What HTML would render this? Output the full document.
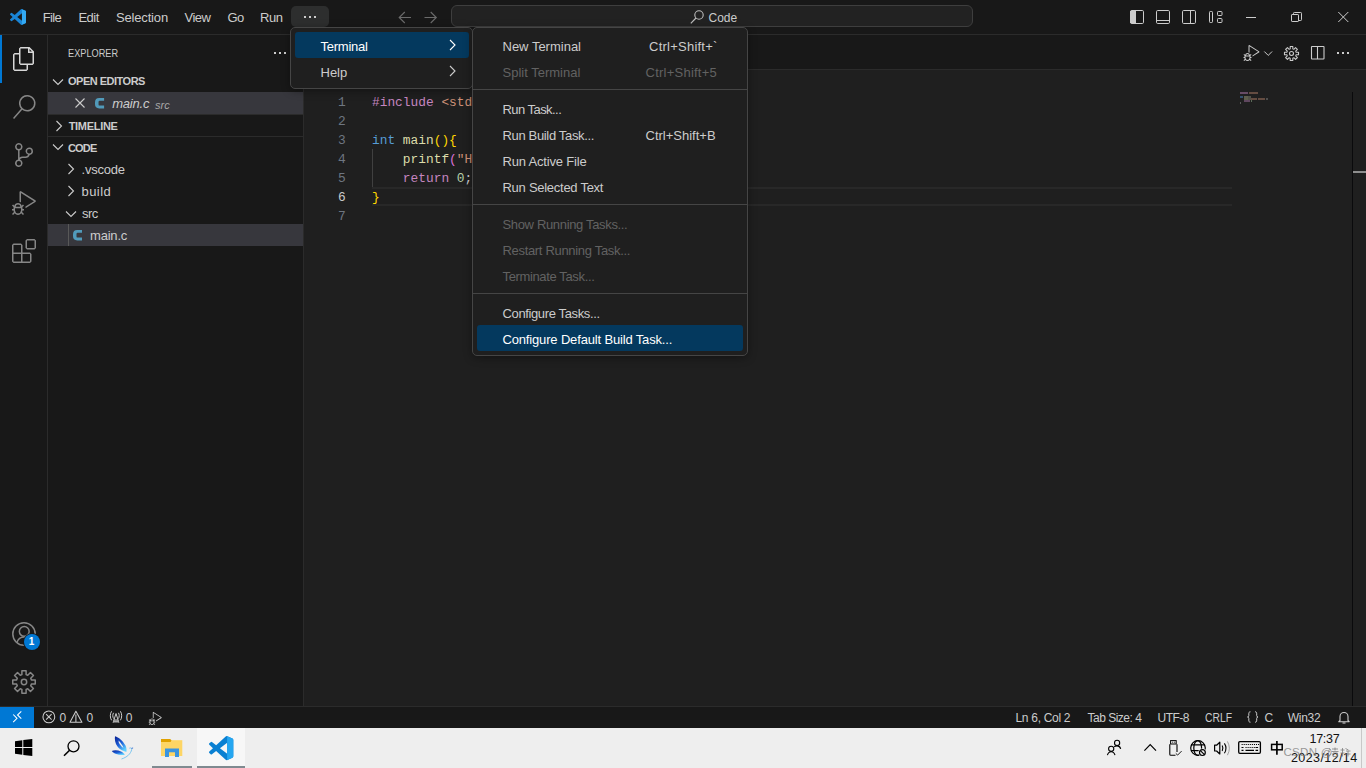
<!DOCTYPE html>
<html><head><meta charset="utf-8">
<style>
*{box-sizing:border-box;margin:0;padding:0}
html,body{width:1366px;height:768px;overflow:hidden;background:#1f1f1f;font-family:"Liberation Sans",sans-serif;color:#cccccc}
.a{position:absolute}
.t{position:absolute;white-space:pre;line-height:1}
svg{position:absolute;overflow:visible}
#titlebar{left:0;top:0;width:1366px;height:35px;background:#181818;border-bottom:1px solid #2b2b2b}
#activity{left:0;top:35px;width:48px;height:671px;background:#181818;border-right:1px solid #2b2b2b}
#sidebar{left:48px;top:35px;width:256px;height:671px;background:#181818;border-right:1px solid #2b2b2b}
#tabs{left:304px;top:35px;width:1062px;height:35px;background:#181818;border-bottom:1px solid #2b2b2b}
#editor{left:304px;top:70px;width:1062px;height:636px;background:#1f1f1f}
#status{left:0;top:706px;width:1366px;height:22px;background:#181818;border-top:1px solid #2b2b2b}
#taskbar{left:0;top:728px;width:1366px;height:40px;background:#eeeeee}
.menu{position:absolute;background:#1f1f1f;border:1px solid #454545;border-radius:5px;box-shadow:0 2px 8px rgba(0,0,0,.36)}
.mi{position:absolute;font-size:13px;color:#cccccc;white-space:pre;line-height:1}
.dis{color:#626262}
.sep{position:absolute;height:1px;background:#454545}
.code{position:absolute;font-family:"Liberation Mono",monospace;font-size:12.85px;white-space:pre;line-height:19px}
.ln{position:absolute;font-family:"Liberation Mono",monospace;font-size:12.85px;white-space:pre;line-height:19px;text-align:right;color:#6e7681}
.tb{font-size:13px;color:#cccccc}
.sb{font-size:12px;color:#cccccc}
</style></head>
<body>
<!-- ================= TITLE BAR ================= -->
<div id="titlebar" class="a"></div>
<svg style="left:10px;top:9px" width="16" height="16" viewBox="0 0 100 100"><path fill="#1a85d6" d="M96.46 10.8L75.86.87a6.23 6.23 0 0 0-7.1 1.2L29.35 38.04 12.18 25.01a4.16 4.16 0 0 0-5.320.24L1.36 30.25a4.16 4.16 0 0 0 0 6.16L16.25 50 1.36 63.59a4.160 4.16 0 0 0 0 6.16l5.5 5a4.16 4.16 0 0 0 5.32.24l17.17-13.03 39.41 35.96a6.23 6.23 0 0 0 7.1 1.2l20.6-9.92a6.25 6.25 0 0 0 3.54-5.63V16.43a6.25 6.25 0 0 0-3.54-5.63zM75.02 72.7L45.11 50l29.91-22.7z"/><path fill="#33a9f2" d="M74.5 1.2L96.46 10.8a6.25 6.25 0 0 1 3.54 5.63V83.57a6.25 6.25 0 0 1-3.54 5.63L74.5 98.8z"/></svg>
<span class="t tb" style="left:42.8px;top:11px;letter-spacing:-0.65px">File</span>
<span class="t tb" style="left:78.5px;top:11px;letter-spacing:-0.55px">Edit</span>
<span class="t tb" style="left:116px;top:11px;letter-spacing:-0.17px">Selection</span>
<span class="t tb" style="left:184.5px;top:11px;letter-spacing:-0.5px">View</span>
<span class="t tb" style="left:227.5px;top:11px;letter-spacing:-0.6px">Go</span>
<span class="t tb" style="left:260px;top:11px;letter-spacing:-0.45px">Run</span>
<div class="a" style="left:291px;top:6px;width:38px;height:21px;background:#2d2e2e;border-radius:5px"></div>
<div class="a" style="left:304px;top:16px;width:2px;height:2px;background:#cccccc"></div>
<div class="a" style="left:309px;top:16px;width:2px;height:2px;background:#cccccc"></div>
<div class="a" style="left:314px;top:16px;width:2px;height:2px;background:#cccccc"></div>
<!-- nav arrows -->
<svg style="left:398px;top:11px" width="14" height="13" viewBox="0 0 14 13"><path d="M13 6.5H1.2M6.8 1L1.2 6.5 6.8 12" stroke="#6b6b6b" stroke-width="1.1" fill="none"/></svg>
<svg style="left:424px;top:11px" width="14" height="13" viewBox="0 0 14 13"><path d="M0.5 6.5H12.3M6.7 1l5.6 5.5L6.7 12" stroke="#6b6b6b" stroke-width="1.1" fill="none"/></svg>
<!-- command center -->
<div class="a" style="left:451px;top:5px;width:522px;height:22px;background:#222222;border:1px solid #3e3e3e;border-radius:6px"></div>
<svg style="left:690px;top:10px" width="14" height="14" viewBox="0 0 14 14"><circle cx="9" cy="5" r="4.2" stroke="#bdbdbd" stroke-width="1.1" fill="none"/><path d="M6 8L0.8 13.3" stroke="#bdbdbd" stroke-width="1.2"/></svg>
<span class="t" style="left:708.5px;top:12px;font-size:12px;color:#cccccc">Code</span>
<!-- layout icons -->
<svg style="left:1120px;top:0" width="120" height="34" viewBox="1120 0 120 34"><g stroke="#cccccc" stroke-width="1" fill="none">
<rect x="1130.5" y="10.5" width="13" height="13" rx="1.2"/><path d="M1130 11h5.5v12H1130z" fill="#cccccc" stroke="none"/><rect x="1131" y="10.5" width="5" height="13" fill="#cccccc" stroke="none"/>
<rect x="1156.5" y="10.5" width="13" height="13" rx="1.2"/><path d="M1156.5 20.5h13"/>
<rect x="1182.5" y="10.5" width="13" height="13" rx="1.2"/><path d="M1190.5 10.5v13"/>
<rect x="1209.5" y="11.5" width="3" height="11" rx="0.8"/><rect x="1217.5" y="11.5" width="4.5" height="4" rx="0.8"/><rect x="1217.5" y="18.5" width="4.5" height="4" rx="0.8"/>
</g></svg>
<!-- window controls -->
<div class="a" style="left:1246px;top:17px;width:10px;height:1px;background:#cccccc"></div>
<svg style="left:1291px;top:12px" width="11" height="10" viewBox="0 0 11 10"><rect x="0.5" y="2.5" width="7" height="7" rx="0.6" stroke="#cccccc" stroke-width="1" fill="none"/><path d="M2.5 2.5V1.3Q2.5 0.5 3.3 0.5H9.7Q10.5 0.5 10.5 1.3V7.7Q10.5 8.5 9.7 8.5H7.5" stroke="#cccccc" stroke-width="1" fill="none"/></svg>
<svg style="left:1338px;top:12px" width="11" height="10" viewBox="0 0 11 10"><path d="M0.3 0L10.3 10M10.3 0L0.3 10" stroke="#cccccc" stroke-width="1"/></svg>

<!-- ================= ACTIVITY BAR ================= -->
<div id="activity" class="a"></div>
<div class="a" style="left:0;top:35px;width:2px;height:48px;background:#0078d4"></div>
<svg style="left:12px;top:47px" width="24" height="24" viewBox="0 0 24 24"><path fill="#d7d7d7" fill-rule="evenodd" d="M17.5 0h-9L7 1.5V6H2.5L1 7.5v15.07L2.5 24h12.07L16 22.57V18h4.7l1.3-1.43V4.5L17.5 0zm0 2.12l2.38 2.38H17.5V2.12zm-3 20.38h-12v-15H7v9.07L8.5 18h6v4.5zm6-6h-12v-15H16V6h4.5v10.5z"/></svg>
<svg style="left:12px;top:95px" width="24" height="24" viewBox="0 0 24 24"><path fill="#868686" d="M15.25 0a8.25 8.25 0 0 0-6.18 13.72L1 22.88l1.12 1 8.07-9.16A8.25 8.25 0 1 0 15.25.01V0zm0 15a6.75 6.75 0 1 1 0-13.5 6.75 6.75 0 0 1 0 13.5z"/></svg>
<svg style="left:12px;top:143px" width="24" height="24" viewBox="0 0 24 24"><path fill="#868686" d="M21.007 8.222A3.738 3.738 0 0 0 15.045 5.2a3.737 3.737 0 0 0 1.156 6.583 2.988 2.988 0 0 1-2.668 1.67h-2.99a4.456 4.456 0 0 0-2.989 1.165V7.4a3.737 3.737 0 1 0-1.494 0v9.117a3.776 3.776 0 1 0 1.816.099 2.99 2.99 0 0 1 2.668-1.667h2.990a4.484 4.484 0 0 0 4.223-3.039 3.736 3.736 0 0 0 3.250-3.687zM4.565 3.738a2.242 2.242 0 1 1 4.484 0 2.242 2.242 0 0 1-4.484 0zm4.484 16.441a2.242 2.242 0 1 1-4.484 0 2.242 2.242 0 0 1 4.484 0zm8.221-9.715a2.242 2.242 0 1 1 0-4.485 2.242 2.242 0 0 1 0 4.485z"/></svg>
<svg style="left:12px;top:191px" width="24" height="24" viewBox="0 0 24 24"><path fill="#868686" d="M10.94 13.5l-1.32 1.32a3.730 3.73 0 0 0-7.240 0L1.06 13.5 0 14.56l1.72 1.72-.22.22V18H0v1.5h1.5v.08c.077.489.214.966.41 1.42L0 22.94 1.06 24l1.65-1.65A4.308 4.308 0 0 0 6 24a4.310 4.31 0 0 0 3.290-1.65L10.94 24 12 22.94 10.09 21c.198-.464.336-.951.41-1.450v-.1H12V18h-1.5v-1.5l-.22-.22L12 14.56l-1.06-1.06zM6 13.5a2.25 2.25 0 0 1 2.25 2.25h-4.5A2.25 2.25 0 0 1 6 13.5zm3 6a3.33 3.33 0 0 1-3 3 3.33 3.33 0 0 1-3-3v-2.25h6v2.25zm14.76-9.9v1.26L13.5 17.37V15.6l8.5-5.37L9 2v9.46a5.07 5.070 0 0 0-1.5-.72V.63L8.64 0l15.12 9.6z"/></svg>
<svg style="left:12px;top:239px" width="24" height="24" viewBox="0 0 24 24"><path fill="#868686" d="M13.5 1.5L15 0h7.5L24 1.5V9l-1.5 1.5H15L13.5 9V1.5zm1.5 0V9h7.5V1.5H15zM0 15V6l1.5-1.5H9L10.5 6v7.5H18l1.5 1.5v7.5L18 24H1.5L0 22.5V15zm9-1.5V6H1.5v7.5H9zM9 15H1.5v7.5H9V15zm1.5 7.5H18V15h-7.5v7.5z"/></svg>
<!-- accounts -->
<svg style="left:12px;top:622px" width="24" height="24" viewBox="0 0 24 24"><circle cx="12" cy="12" r="11.2" stroke="#868686" stroke-width="1.5" fill="none"/><circle cx="12.25" cy="9.4" r="4.9" stroke="#868686" stroke-width="1.5" fill="none"/><path d="M4.9 20.6C6 17 8.8 15 12.2 15s6.3 2 7.4 5.6" stroke="#868686" stroke-width="1.5" fill="none"/></svg>
<div class="a" style="left:23px;top:633px;width:18px;height:18px;border-radius:9px;background:#181818"></div><div class="a" style="left:24px;top:634px;width:16px;height:16px;border-radius:8px;background:#0078d4"></div>
<span class="t" style="left:28.7px;top:637px;font-size:10px;font-weight:700;color:#ffffff">1</span>
<!-- gear -->
<svg style="left:12px;top:670px" width="24" height="24" viewBox="0 0 24 24"><path stroke="#868686" stroke-width="1.5" fill="none" stroke-linejoin="round" d="M9.90 4.60 L9.90 0.75 L14.10 0.75 L14.10 4.60 L15.75 5.28 L18.47 2.56 L21.44 5.53 L18.72 8.25 L19.40 9.90 L23.25 9.90 L23.25 14.10 L19.40 14.10 L18.72 15.75 L21.44 18.47 L18.47 21.44 L15.75 18.72 L14.10 19.40 L14.10 23.25 L9.90 23.25 L9.90 19.40 L8.25 18.72 L5.53 21.44 L2.56 18.47 L5.28 15.75 L4.60 14.10 L0.75 14.10 L0.75 9.90 L4.60 9.90 L5.28 8.25 L2.56 5.53 L5.53 2.56 L8.25 5.28Z"/><circle cx="12" cy="12" r="2.7" stroke="#868686" stroke-width="1.5" fill="none"/></svg>

<!-- ================= SIDEBAR ================= -->
<div id="sidebar" class="a"></div>
<span class="t" style="left:68px;top:47.7px;font-size:11px;transform:scaleX(0.835);transform-origin:0 0">EXPLORER</span>
<div class="a" style="left:274px;top:52px;width:2px;height:2px;background:#cccccc"></div>
<div class="a" style="left:279px;top:52px;width:2px;height:2px;background:#cccccc"></div>
<div class="a" style="left:284px;top:52px;width:2px;height:2px;background:#cccccc"></div>
<!-- open editors header -->
<svg style="left:52px;top:77.6px" width="12" height="8" viewBox="0 0 12 8"><path d="M1 1.5l5 5 5-5" stroke="#cccccc" stroke-width="1.1" fill="none"/></svg>
<span class="t" style="left:68px;top:75.7px;font-size:11px;font-weight:700;letter-spacing:-0.5px">OPEN EDITORS</span>
<div class="a" style="left:48px;top:92px;width:255px;height:22px;background:#37373d"></div>
<svg style="left:75px;top:98px" width="10" height="10" viewBox="0 0 10 10"><path d="M0.5 0.5l9 9M9.5 0.5l-9 9" stroke="#cccccc" stroke-width="1.1"/></svg>
<svg style="left:95.1px;top:97.8px" width="9.1" height="10.4" viewBox="0 0 9 10.4" preserveAspectRatio="none"><path fill="#519aba" d="M9 0H4.2Q0 0 0 4.4V6Q0 10.4 4.2 10.4H9V7.6H4.6Q3.5 7.6 3.5 6.4V4Q3.5 2.8 4.6 2.8H9Z"/></svg>
<span class="t" style="left:112.2px;top:97px;font-size:13px;font-style:italic;letter-spacing:-0.2px">main.c</span>
<span class="t" style="left:155px;top:99.7px;font-size:11px;font-style:italic;color:#a8a8a8">src</span>
<!-- timeline header -->
<div class="a" style="left:48px;top:114px;width:255px;height:1px;background:#2b2b2b"></div>
<svg style="left:55px;top:120px" width="8" height="12" viewBox="0 0 8 12"><path d="M1.5 1l5 5-5 5" stroke="#cccccc" stroke-width="1.1" fill="none"/></svg>
<span class="t" style="left:68.7px;top:120.7px;font-size:11px;font-weight:700;letter-spacing:-0.3px">TIMELINE</span>
<!-- code header -->
<div class="a" style="left:48px;top:136px;width:255px;height:1px;background:#2b2b2b"></div>
<svg style="left:52px;top:143px" width="12" height="8" viewBox="0 0 12 8"><path d="M1 1.5l5 5 5-5" stroke="#cccccc" stroke-width="1.1" fill="none"/></svg>
<span class="t" style="left:68px;top:142.7px;font-size:11px;font-weight:700;letter-spacing:-0.85px">CODE</span>
<!-- tree -->
<svg style="left:67px;top:163.2px" width="8" height="12" viewBox="0 0 8 12"><path d="M1.5 1l5 5-5 5" stroke="#cccccc" stroke-width="1.1" fill="none"/></svg>
<span class="t" style="left:81.5px;top:163px;font-size:13px;letter-spacing:-0.2px">.vscode</span>
<svg style="left:67px;top:185.2px" width="8" height="12" viewBox="0 0 8 12"><path d="M1.5 1l5 5-5 5" stroke="#cccccc" stroke-width="1.1" fill="none"/></svg>
<span class="t" style="left:81.5px;top:185px;font-size:13px;letter-spacing:0.45px">build</span>
<svg style="left:65px;top:210px" width="12" height="8" viewBox="0 0 12 8"><path d="M1 1.5l5 5 5-5" stroke="#cccccc" stroke-width="1.1" fill="none"/></svg>
<span class="t" style="left:82px;top:207px;font-size:13px;letter-spacing:-0.6px">src</span>
<div class="a" style="left:48px;top:224px;width:255px;height:22px;background:#37373d"></div>
<div class="a" style="left:68px;top:224px;width:1px;height:22px;background:#585858"></div>
<svg style="left:73.3px;top:229.8px" width="9" height="10.4" viewBox="0 0 9 10.4" preserveAspectRatio="none"><path fill="#519aba" d="M9 0H4.2Q0 0 0 4.4V6Q0 10.4 4.2 10.4H9V7.6H4.6Q3.5 7.6 3.5 6.4V4Q3.5 2.8 4.6 2.8H9Z"/></svg>
<span class="t" style="left:90px;top:229px;font-size:13px;letter-spacing:-0.2px">main.c</span>

<!-- ================= EDITOR ================= -->
<div id="tabs" class="a"></div>
<div id="editor" class="a"></div>
<!-- editor actions -->
<svg style="left:1243px;top:45px" width="17" height="16" viewBox="0 0 24 24"><path fill="#cccccc" d="M10.94 13.5l-1.32 1.32a3.730 3.73 0 0 0-7.240 0L1.06 13.5 0 14.56l1.720 1.72-.22.22V18H0v1.5h1.5v.08c.077.489.214.966.41 1.42L0 22.94 1.06 24l1.65-1.65A4.308 4.308 0 0 0 6 24a4.310 4.31 0 0 0 3.290-1.65L10.94 24 12 22.94 10.09 21c.198-.464.336-.951.41-1.450v-.1H12V18h-1.5v-1.5l-.22-.22L12 14.56l-1.06-1.06zM6 13.5a2.25 2.25 0 0 1 2.25 2.25h-4.5A2.25 2.25 0 0 1 6 13.5zm3 6a3.33 3.33 0 0 1-3 3 3.33 3.33 0 0 1-3-3v-2.25h6v2.25zm14.76-9.9v1.26L13.5 17.37V15.6l8.5-5.37L9 2v9.46a5.07 5.070 0 0 0-1.5-.72V.63L8.64 0l15.12 9.6z"/></svg>
<svg style="left:1264px;top:51px" width="9" height="5" viewBox="0 0 9 5"><path d="M0.3 0.5l3.9 3.9 3.9-3.9" stroke="#cccccc" stroke-width="1" fill="none"/></svg>
<svg style="left:1283.5px;top:45.5px" width="15" height="15" viewBox="0 0 24 24"><path stroke="#cccccc" stroke-width="1.7" fill="none" stroke-linejoin="round" d="M9.90 4.60 L9.90 0.75 L14.10 0.75 L14.10 4.60 L15.75 5.28 L18.47 2.56 L21.44 5.53 L18.72 8.25 L19.40 9.90 L23.25 9.90 L23.25 14.10 L19.40 14.10 L18.72 15.75 L21.44 18.47 L18.47 21.44 L15.75 18.72 L14.10 19.40 L14.10 23.25 L9.90 23.25 L9.90 19.40 L8.25 18.72 L5.53 21.44 L2.56 18.47 L5.28 15.75 L4.60 14.10 L0.75 14.10 L0.75 9.90 L4.60 9.90 L5.28 8.25 L2.56 5.53 L5.53 2.56 L8.25 5.28Z"/><circle cx="12" cy="12" r="3.2" stroke="#cccccc" stroke-width="1.7" fill="none"/></svg>
<svg style="left:1310px;top:46px" width="15" height="14" viewBox="0 0 15 14"><rect x="1.5" y="0.5" width="12.5" height="12.5" rx="0.5" stroke="#cccccc" stroke-width="1.1" fill="none"/><path d="M7.5 0.5V13" stroke="#cccccc" stroke-width="1.1"/></svg>
<div class="a" style="left:1337px;top:52px;width:2px;height:2px;background:#cccccc"></div>
<div class="a" style="left:1342px;top:52px;width:2px;height:2px;background:#cccccc"></div>
<div class="a" style="left:1347px;top:52px;width:2px;height:2px;background:#cccccc"></div>

<!-- current line highlight -->
<div class="a" style="left:372px;top:187px;width:860px;height:19px;border-top:2px solid #282828;border-bottom:2px solid #282828"></div>
<!-- indent guide -->
<div class="a" style="left:372px;top:149px;width:1px;height:38px;background:#404040"></div>
<!-- line numbers -->
<div class="ln" style="left:310px;top:93px;width:35.7px">1
2
3
4
5
<span style="color:#cccccc">6</span>
7</div>
<div class="code" style="left:372px;top:93px;color:#cccccc"><span style="color:#c586c0">#include</span> <span style="color:#ce9178">&lt;stdio.h&gt;</span>

<span style="color:#569cd6">int</span> <span style="color:#dcdcaa">main</span><span style="color:#ffd700">(){</span>
    <span style="color:#dcdcaa">printf</span><span style="color:#da70d6">(</span><span style="color:#ce9178">"Hello World!\n"</span><span style="color:#da70d6">)</span>;
    <span style="color:#c586c0">return</span> <span style="color:#b5cea8">0</span>;
<span style="color:#ffd700">}</span>
</div>
<!-- minimap -->
<div class="a" style="left:1240px;top:92px;width:8px;height:2px;background:#674c65"></div>
<div class="a" style="left:1249px;top:92px;width:9px;height:2px;background:#644c41"></div>
<div class="a" style="left:1240px;top:96px;width:3px;height:2px;background:#34526e"></div>
<div class="a" style="left:1244px;top:96px;width:7px;height:4px;background:#515147"></div>
<div class="a" style="left:1244px;top:96px;width:4px;height:4px;background:#5e5e4c"></div>
<div class="a" style="left:1251px;top:98px;width:6px;height:2px;background:#644c41"></div>
<div class="a" style="left:1258px;top:98px;width:7px;height:2px;background:#644c41"></div>
<div class="a" style="left:1266px;top:98px;width:2px;height:2px;background:#4e4e4e"></div>
<div class="a" style="left:1244px;top:100px;width:6px;height:2px;background:#5f475f"></div>
<div class="a" style="left:1251px;top:100px;width:1px;height:2px;background:#5b6c59"></div>
<div class="a" style="left:1240px;top:102px;width:1px;height:2px;background:#5b5b5b"></div>
<!-- scrollbar -->
<div class="a" style="left:1352px;top:92px;width:1px;height:614px;background:#0a0a0c"></div>
<div class="a" style="left:1353px;top:171px;width:13px;height:2px;background:#8e8e8e"></div>

<!-- ================= MENUS ================= -->
<div class="menu" style="left:290px;top:27px;width:183px;height:62px"></div>
<div class="a" style="left:295px;top:32px;width:174px;height:26px;background:#04395e;border-radius:3px"></div>
<span class="mi" style="left:320.5px;top:40px;color:#ffffff;letter-spacing:-0.25px">Terminal</span>
<svg style="left:449px;top:39px" width="8" height="12" viewBox="0 0 8 12"><path d="M1 1l5 5-5 5" stroke="#ffffff" stroke-width="1.1" fill="none"/></svg>
<span class="mi" style="left:320.5px;top:66px">Help</span>
<svg style="left:449px;top:65px" width="8" height="12" viewBox="0 0 8 12"><path d="M1 1l5 5-5 5" stroke="#cccccc" stroke-width="1.1" fill="none"/></svg>

<div class="menu" style="left:472px;top:27px;width:276px;height:329px"></div>
<span class="mi" style="left:502.5px;top:40px">New Terminal</span>
<span class="mi" style="left:649px;top:40px;letter-spacing:0.24px">Ctrl+Shift+`</span>
<span class="mi dis" style="left:502.5px;top:66px">Split Terminal</span>
<span class="mi dis" style="left:645.5px;top:66px;letter-spacing:0.24px">Ctrl+Shift+5</span>
<div class="sep" style="left:473px;top:89px;width:274px"></div>
<span class="mi" style="left:502.5px;top:103px;letter-spacing:-0.55px">Run Task...</span>
<span class="mi" style="left:502.5px;top:129px;letter-spacing:-0.34px">Run Build Task...</span>
<span class="mi" style="left:645.5px;top:129px">Ctrl+Shift+B</span>
<span class="mi" style="left:502.5px;top:155px;letter-spacing:-0.18px">Run Active File</span>
<span class="mi" style="left:502.5px;top:181px;letter-spacing:-0.27px">Run Selected Text</span>
<div class="sep" style="left:473px;top:204px;width:274px"></div>
<span class="mi dis" style="left:502.5px;top:218px;letter-spacing:-0.34px">Show Running Tasks...</span>
<span class="mi dis" style="left:502.5px;top:244px;letter-spacing:-0.32px">Restart Running Task...</span>
<span class="mi dis" style="left:502.5px;top:270px;letter-spacing:-0.36px">Terminate Task...</span>
<div class="sep" style="left:473px;top:293px;width:274px"></div>
<span class="mi" style="left:502.5px;top:307px;letter-spacing:-0.37px">Configure Tasks...</span>
<div class="a" style="left:477px;top:325px;width:266px;height:26px;background:#04395e;border-radius:3px"></div>
<span class="mi" style="left:502.5px;top:333px;color:#ffffff;letter-spacing:-0.16px">Configure Default Build Task...</span>

<!-- ================= STATUS BAR ================= -->
<div id="status" class="a"></div>
<div class="a" style="left:0;top:707px;width:34px;height:21px;background:#0078d4"></div>
<svg style="left:12px;top:711px" width="11" height="12" viewBox="0 0 11 12"><path d="M1.2 3.5L5 7.3 1.2 11.2M9.3 0.3L5.5 4 9.3 7.7" stroke="#ffffff" stroke-width="1.05" fill="none"/></svg>
<svg style="left:42px;top:710px" width="14" height="14" viewBox="0 0 14 14"><circle cx="6.85" cy="6.9" r="5.9" stroke="#cccccc" stroke-width="1.05" fill="none"/><path d="M4.1 4.1l5.5 5.5M9.6 4.1l-5.5 5.5" stroke="#cccccc" stroke-width="1.05"/></svg>
<span class="t sb" style="left:59.4px;top:711.8px">0</span>
<svg style="left:69px;top:710px" width="14" height="13" viewBox="0 0 14 13"><path d="M6.9 1.2L1 12.2H12.9Z" stroke="#cccccc" stroke-width="1.05" fill="none" stroke-linejoin="round"/><path d="M6.9 4.5V12" stroke="#cccccc" stroke-width="1.05"/></svg>
<span class="t sb" style="left:86.4px;top:711.8px">0</span>
<svg style="left:109px;top:710px" width="14" height="14" viewBox="0 0 14 14"><g stroke="#cccccc" stroke-width="1" fill="none"><path d="M2.6 1.3C0.9 3.5 0.9 8 2.6 10.3M11.4 1.3C13.1 3.5 13.1 8 11.4 10.3M4.6 2.8C3.5 4.3 3.5 7 4.6 8.6M9.4 2.8C10.5 4.3 10.5 7 9.4 8.6"/><path d="M7 3.5L4.1 12.6M7 3.5L9.9 12.6M5 10h4"/></g><path d="M4.5 10.6h5l0.6 2H3.9z" fill="#aaaaaa"/></svg>
<span class="t sb" style="left:125.7px;top:711.8px">0</span>
<svg style="left:147.8px;top:711.5px" width="14.5" height="13" viewBox="0 0 24 24"><path fill="#cccccc" d="M10.94 13.5l-1.32 1.32a3.730 3.73 0 0 0-7.240 0L1.06 13.5 0 14.56l1.72 1.72-.22.22V18H0v1.5h1.5v.08c.077.489.214.966.41 1.42L0 22.94 1.06 24l1.65-1.65A4.308 4.308 0 0 0 6 24a4.310 4.31 0 0 0 3.290-1.65L10.94 24 12 22.94 10.09 21c.198-.464.336-.951.41-1.450v-.1H12V18h-1.5v-1.5l-.22-.22L12 14.56l-1.06-1.06zM6 13.5a2.25 2.25 0 0 1 2.25 2.25h-4.5A2.25 2.25 0 0 1 6 13.5zm3 6a3.33 3.33 0 0 1-3 3 3.33 3.33 0 0 1-3-3v-2.25h6v2.25zm14.76-9.9v1.26L13.5 17.37V15.6l8.5-5.37L9 2v9.46a5.07 5.070 0 0 0-1.5-.72V.63L8.64 0l15.12 9.6z"/></svg>
<span class="t sb" style="left:1015.5px;top:711.8px;letter-spacing:-0.3px">Ln 6, Col 2</span>
<span class="t sb" style="left:1087.5px;top:711.8px;letter-spacing:-0.5px">Tab Size: 4</span>
<span class="t sb" style="left:1157.5px;top:711.8px;letter-spacing:-0.5px">UTF-8</span>
<span class="t sb" style="left:1205px;top:711.8px;transform:scaleX(0.86);transform-origin:0 0">CRLF</span>
<svg style="left:1247px;top:711px" width="12" height="12" viewBox="0 0 12 12"><path d="M3.5 0.8C2 0.8 1.8 1.5 1.8 2.8V4.6C1.8 5.5 1.3 6 0.5 6 1.3 6 1.8 6.5 1.8 7.4V9.2C1.8 10.5 2 11.2 3.5 11.2M8 0.8C9.5 0.8 9.7 1.5 9.7 2.8V4.6C9.7 5.5 10.2 6 11 6 10.2 6 9.7 6.5 9.7 7.4V9.2C9.7 10.5 9.5 11.2 8 11.2" stroke="#cccccc" stroke-width="1" fill="none"/></svg>
<span class="t sb" style="left:1264.5px;top:711.8px">C</span>
<span class="t sb" style="left:1287.8px;top:711.8px;letter-spacing:-0.3px">Win32</span>
<svg style="left:1338px;top:711px" width="12" height="13" viewBox="0 0 12 13"><path d="M2 9.5V5.5a4 4 0 0 1 8 0v4l1.2 1.2H0.8z" stroke="#cccccc" stroke-width="1.1" fill="none" stroke-linejoin="round"/><path d="M4.5 12h3" stroke="#cccccc" stroke-width="1.1"/></svg>

<!-- ================= TASKBAR ================= -->
<div id="taskbar" class="a"></div>
<svg style="left:15px;top:739px" width="18" height="17" viewBox="0 0 18 17"><path fill="#000" d="M0 2.3L7.3 1.3V8H0zM8.3 1.1L17.3 0V8H8.3zM0 9H7.3V15.7L0 14.7zM8.3 9H17.3V17L8.3 15.9z"/></svg>
<svg style="left:63px;top:740px" width="18" height="17" viewBox="0 0 18 17"><circle cx="10.5" cy="6.3" r="5.5" stroke="#000" stroke-width="1.3" fill="none"/><path d="M6.6 10.2L1 15.8" stroke="#000" stroke-width="1.6"/></svg>
<!-- dove -->
<svg style="left:110px;top:735px" width="26" height="26" viewBox="0 0 26 26"><defs><linearGradient id="dg" x1="0" y1="0" x2="0.6" y2="1"><stop offset="0" stop-color="#0a1f8f"/><stop offset="0.55" stop-color="#1d5fd8"/><stop offset="1" stop-color="#5fd0ff"/></linearGradient></defs>
<path fill="url(#dg)" d="M5 1.2C8.5 2 13 6 15.5 10.5c1 2 1.3 4.5 0.8 6.5C14 16 10 15 7.5 11.5 5 8.5 4.5 4 5 1.2z"/>
<path fill="#f0f0f0" d="M8.5 5.5c2 2 4 4.5 5 7.5-1.5-1-3-2.5-4-4-.6-1-1-2.3-1-3.5z"/>
<path fill="url(#dg)" d="M1.8 16C4 14.8 8 15 11 16.5c2 1 3.5 2.3 3.8 3.3-3 .5-6 .2-8.5-.8C4.3 18.3 2.8 17.3 1.8 16z"/>
<path d="M11.5 24c3-1 6-2.5 8-5 1.5-2 2.5-4 2-5.5-.4-.8-1.5-.8-2.2-.2" stroke="#6fc2ef" stroke-width="0.9" fill="none"/>
<path d="M21.5 13.3l1.6-0.3" stroke="#3a6fcf" stroke-width="1" fill="none"/>
</svg>
<!-- folder -->
<div class="a" style="left:152px;top:766px;width:40px;height:2px;background:#7f8a90"></div>
<svg style="left:161px;top:739px" width="22" height="18" viewBox="0 0 22 18"><path fill="#fdd565" d="M0 1.2h21.3V17H0z"/><path fill="#e0a100" d="M0 0h8.8a1.5 1.5 0 0 1 0 3H0z"/><path fill="#3a94e0" d="M4 9.6h14V18h-4V13.3H8V18H4z"/></svg>
<!-- vscode -->
<div class="a" style="left:197px;top:728px;width:48px;height:40px;background:#f7f7f7"></div>
<div class="a" style="left:197px;top:766px;width:48px;height:2px;background:#7f8a90"></div>
<svg style="left:208.8px;top:735.6px" width="24.3" height="24.3" viewBox="0 0 100 100"><path fill="#0a80d2" d="M96.46 10.8L75.86.87a6.23 6.23 0 0 0-7.1 1.2L29.35 38.04 12.18 25.01a4.16 4.16 0 0 0-5.320.24L1.36 30.25a4.16 4.16 0 0 0 0 6.16L16.25 50 1.36 63.59a4.160 4.16 0 0 0 0 6.16l5.5 5a4.16 4.16 0 0 0 5.32.24l17.17-13.03 39.41 35.96a6.23 6.23 0 0 0 7.1 1.2l20.6-9.92a6.25 6.25 0 0 0 3.54-5.63V16.43a6.25 6.25 0 0 0-3.54-5.63zM75.02 72.7L45.11 50l29.91-22.7z"/><path fill="#25a6f0" d="M74.5 1.2L96.46 10.8a6.25 6.25 0 0 1 3.54 5.63V83.57a6.25 6.25 0 0 1-3.54 5.63L74.5 98.8z"/></svg>
<!-- tray -->
<svg style="left:1100px;top:734px" width="90" height="28" viewBox="1100 734 90 28"><g stroke="#000" stroke-width="1.1" fill="none">
<circle cx="1111.2" cy="748.8" r="2.6"/><path d="M1107.4 755.2Q1108.3 751.8 1111.2 751.8T1115 755.2"/>
<circle cx="1117.1" cy="742.9" r="2.6"/><path d="M1114.2 746.8Q1115 745.9 1117.1 745.9 1119.8 745.9 1120.7 748.8"/>
<path d="M1144.4 750.6L1150.2 744.6 1156 750.6" stroke-width="1.2"/>
<rect x="1170.6" y="740.6" width="5.6" height="3.4" stroke-width="1"/><path d="M1172.2 742.2h1M1174.2 742.2h1" stroke-width="0.9"/>
<path d="M1169.8 744.2V754.2Q1169.8 755.3 1170.9 755.3H1175.5M1177 744.2V752" stroke-width="1.1"/>
<path d="M1175.8 753.4L1177.6 755.1 1181.6 751.1" stroke-width="0.9"/>
</g></svg>
<svg style="left:1186px;top:734px" width="80" height="26" viewBox="1186 734 80 26"><g stroke="#000" stroke-width="1.2" fill="none">
<circle cx="1198" cy="748" r="7.3"/><ellipse cx="1197.7" cy="748" rx="3.9" ry="7.3"/><path d="M1191 744.8H1205M1191 750.7H1200"/>
<circle cx="1202.4" cy="752.6" r="4.1" fill="#eeeeee" stroke="none"/><circle cx="1202.4" cy="752.6" r="2.9"/><path d="M1200.4 750.6l4 4"/>
<path d="M1214.6 745.2H1216.6L1219.8 742.2V754L1216.6 751H1214.6Z" stroke-linejoin="round"/>
<path d="M1222.2 745.6Q1223.6 748.3 1222.2 751" stroke-width="1.1"/><path d="M1224.4 743.4Q1227.6 748.3 1224.4 753.2" stroke-width="1.1"/>
<path d="M1227.4 741.4Q1231.3 748.3 1227.4 755.2" stroke="#9a9a9a" stroke-width="0.9"/>
<rect x="1238.7" y="741.6" width="21.7" height="11.7" rx="1.2" stroke-width="1.3"/>
<path d="M1241.60 744.5h1.1M1243.65 744.5h1.1M1245.70 744.5h1.1M1247.75 744.5h1.1M1249.80 744.5h1.1M1251.85 744.5h1.1M1253.90 744.5h1.1M1255.95 744.5h1.1M1258.00 744.5h1.1M1245.50 747.5h1.1M1247.55 747.5h1.1M1249.60 747.5h1.1M1251.65 747.5h1.1M1253.70 747.5h1.1M1255.75 747.5h1.1M1241.5 747.5h2M1255.5 747.5h2.6M1241.5 750.4h2M1245.5 750.4h8.5M1255.5 750.4h2.6" stroke-width="1.1"/>
</g></svg>
<svg style="left:1270px;top:740px" width="14" height="16" viewBox="0 0 14 16"><rect x="1.6" y="4.4" width="10.6" height="5.4" stroke="#000" stroke-width="1.5" fill="none"/><path d="M6.9 0.9V14.8" stroke="#000" stroke-width="1.7"/></svg>
<span class="t" style="left:1309.5px;top:733px;font-size:12.5px;color:#111;letter-spacing:-0.3px">17:37</span>
<span class="t" style="left:1291px;top:752px;font-size:12.5px;color:#111;letter-spacing:0.4px">2023/12/14</span>
<span class="t" style="left:1283.5px;top:747px;font-size:11.5px;color:rgba(120,120,120,0.75);letter-spacing:0.3px">CSDN @</span><svg style="left:1328px;top:747px" width="23" height="10" viewBox="0 0 23 10"><g stroke="rgba(120,120,120,0.75)" stroke-width="1" fill="none"><path d="M1 1.5l1.5 1M0.5 4l1.5 1M1 9.5l1.8-3M4 2h6M7 0.5v3M3.5 4.5h7M5 6h4.5v3.5H5z"/><path d="M12.5 3h4M14.5 1v8.5M12.5 6h4M17.5 1.5l3 1.5M18 4h4.5M20 4v5.5M17.5 7h5"/></g></svg>
<div class="a" style="left:1361px;top:728px;width:1px;height:40px;background:#c8c8c8"></div>
</body></html>
